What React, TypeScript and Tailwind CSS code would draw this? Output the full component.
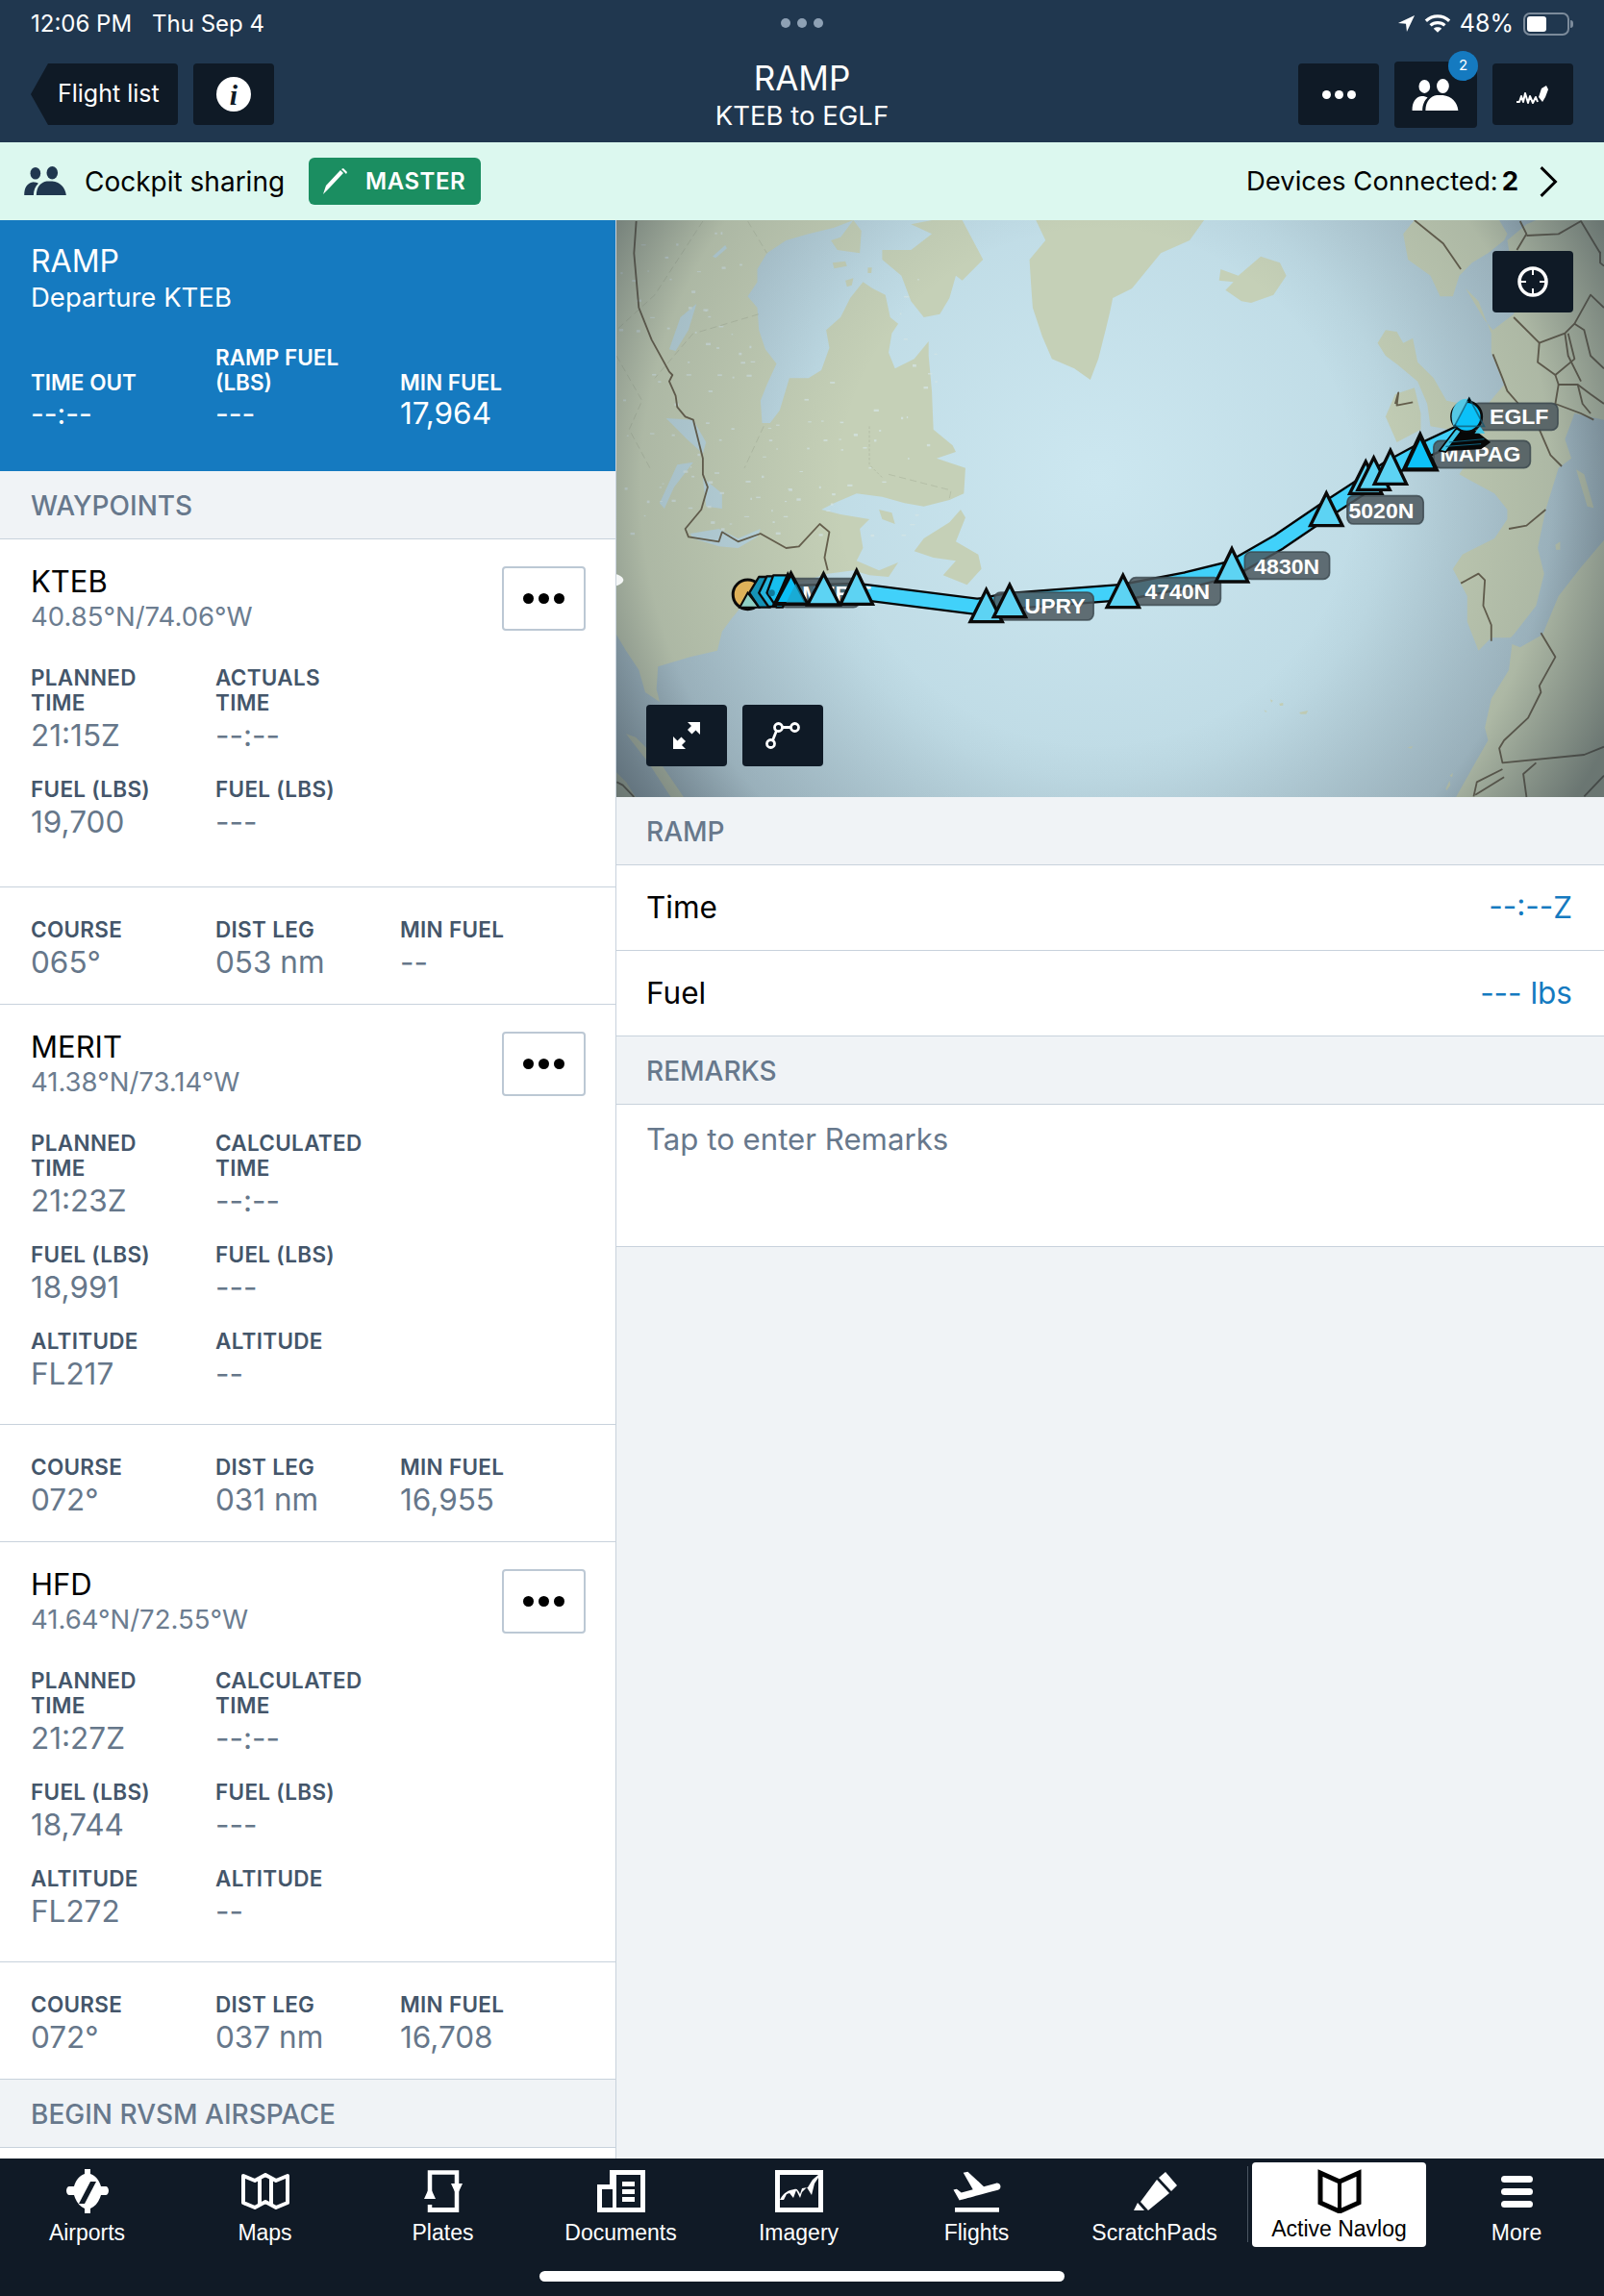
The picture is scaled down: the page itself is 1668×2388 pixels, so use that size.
import React from "react";
import { MdFlightTakeoff } from "react-icons/md";

const People = ({ className = "", color = "#fff" }: { className?: string; color?: string }) => (
  <svg viewBox="0 0 46 32" className={className} fill={color}>
    <ellipse cx="12" cy="7.5" rx="5.5" ry="6.5" />
    <ellipse cx="30" cy="7" rx="6" ry="7" />
    <path d="M0 31c0-8 3-13 9-14 3 0 5 .5 6 1.5-3 2.500-5 7-5 12.500z" />
    <path d="M13 31c0-9 5-14 11-15h6c9 1 14 7 15 15z" />
    <path d="M9 17c2 1 5 1 6 1l-3 2z" />
  </svg>
);

function Triangle({ x, a, b, fill = "#5dd3f3", sw = 10, hw }: { x: number; a: number; b: number; fill?: string; sw?: number; hw?: number }) {
  const h = hw ?? 50;
  return <polygon points={`${x},${a} ${x + h},${b} ${x - h},${b}`} fill={fill} stroke="#0a0a0a" strokeWidth={sw} strokeLinejoin="miter" />;
}

function Label({ x, y, w, h, tx, ty, t }: { x: number; y: number; w: number; h: number; tx: number; ty: number; t: string }) {
  return (
    <g>
      <rect x={x} y={y} width={w} height={h} rx="20" fill="#4c585e" fillOpacity="0.85" stroke="#3a464c" strokeOpacity="0.8" strokeWidth="5" />
      <text x={tx} y={ty} fontFamily="'Liberation Sans',sans-serif" fontWeight="700" fontSize="69" fill="#fff">{t}</text>
    </g>
  );
}

function speckles() {
  let s = 12345;
  const r = () => ((s = (s * 1103515245 + 12345) & 0x7fffffff) / 0x7fffffff);
  const out: React.ReactElement[] = [];
  for (let i = 0; i < 170; i++) {
    const x = r() * 1000;
    const y = 30 + r() * 950;
    if (x > 420 && x < 880 && y < 500) continue;
    out.push(<rect key={i} x={x} y={y} width={4 + r() * 12} height={3 + r() * 5} fill="#d4e4e4" fillOpacity="0.75" />);
  }
  return out;
}

function MapArt() {
  const land = "#c5d0b7";
  return (
    <svg viewBox="0 -3 3084 1800" preserveAspectRatio="none" className="block w-full h-full">
      <defs>
        <radialGradient id="water" gradientUnits="userSpaceOnUse" cx="1500" cy="800" r="1700">
          <stop offset="0" stopColor="#cce7f0" />
          <stop offset="0.55" stopColor="#bfdbe5" />
          <stop offset="1" stopColor="#a5bcc7" />
        </radialGradient>
        <radialGradient id="shade" gradientUnits="userSpaceOnUse" cx="1500" cy="830" r="1780">
          <stop offset="0.45" stopColor="#2e3a44" stopOpacity="0" />
          <stop offset="0.8" stopColor="#2e3a44" stopOpacity="0.16" />
          <stop offset="1" stopColor="#2e3a44" stopOpacity="0.6" />
        </radialGradient>
      </defs>
      <rect x="0" y="-3" width="3084" height="1800" fill="url(#water)" />
      <g fill={land}>
        <polygon points="0,-3 740,-3 680,20 600,40 530,60 470,100 440,150 440,190 410,235 440,270 445,340 465,400 500,445 470,510 450,560 455,630 480,630 510,590 540,490 600,490 640,465 665,395 655,340 700,300 730,240 770,190 800,210 840,230 855,300 880,320 860,350 850,410 870,460 930,430 975,375 975,420 985,530 990,650 1050,700 1060,720 1000,740 1090,770 1085,850 1040,870 960,890 900,880 830,860 750,850 680,880 640,900 700,915 790,930 760,960 770,1020 750,1060 820,1090 880,1065 850,1110 790,1105 740,1090 660,1100 560,1130 430,1150 400,1190 360,1240 330,1280 315,1340 230,1360 130,1390 125,1460 135,1500 90,1470 70,1400 30,1340 0,1290" />
        <polygon points="985,-3 1080,-3 1145,120 1080,185 1060,170 1040,240 1010,290 960,300 920,250 890,170 830,120 830,90 920,90 985,40 920,10" />
        <polygon points="740,-3 765,30 760,100 690,90 670,60 700,50" />
        <polygon points="675,130 715,125 720,140 680,148" />
        <polygon points="715,185 740,178 735,200 720,205" />
        <polygon points="785,145 798,145 796,162 785,162" />
        <polygon points="820,900 860,910 870,945 830,930" />
        <polygon points="1310,-3 1340,60 1290,120 1295,200 1300,270 1330,360 1360,430 1430,460 1480,495 1505,430 1530,330 1542,280 1550,240 1610,210 1700,100 1790,60 1835,-3" />
        <polygon points="930,1030 960,990 1040,940 1075,900 1090,925 1060,1000 1130,1040 1140,1085 1095,1135 1020,1105 1060,1060 990,1050" />
        <polygon points="30,1600 60,1610 130,1680 210,1797 170,1797 100,1690" />
        <polygon points="0,1720 30,1750 60,1797 0,1797" />
        <g transform="translate(1542,0)">
          <polygon points="345,150 400,170 470,110 530,130 550,170 510,230 440,255 410,250 360,215 385,190 340,185" />
          <polygon points="950,-3 1215,-3 1240,40 1230,60 1180,100 1130,130 1090,170 1070,235 1030,235 1000,170 930,120 915,40" />
          <polygon points="1110,210 1170,310 1195,340 1260,290 1290,200 1250,120 1240,60 1300,10 1330,-3 1542,-3 1542,620 1450,600 1420,680 1440,740 1400,770 1360,900 1335,1020 1355,1100 1330,1200 1260,1290 1250,1300 1190,1300 1150,1340 1115,1250 1115,1170 1070,1085 1100,1040 1200,990 1240,930 1240,900 1200,850 1090,790 1110,760 1130,570 1180,570 1230,510 1190,410 1190,350 1150,250" />
          <polygon points="890,540 950,520 970,600 970,650 895,690 860,610" />
          <polygon points="835,380 860,340 895,345 915,380 945,365 960,440 1010,490 1050,560 1100,570 1110,620 1060,650 1000,640 990,570 960,500 900,450 860,420" />
          <polygon points="1255,1320 1245,1400 1190,1490 1170,1580 1180,1620 1140,1690 1080,1797 1542,1797 1542,995 1470,1080 1400,1170 1350,1290 1280,1330" />
          <polygon points="1455,775 1480,790 1510,895 1490,890" />
          <polygon points="1390,1010 1405,1000 1405,1025 1392,1025" />
          <polygon points="480,1525 490,1530 485,1532" />
          <polygon points="500,1492 508,1496 503,1502" />
          <polygon points="528,1505 540,1503 540,1511 530,1512" />
          <polygon points="590,1533 618,1527 612,1538 595,1538" />
          <polygon points="928,1642 945,1638 940,1646" />
          <polygon points="1048,1770 1060,1745 1062,1760 1050,1777" />
          <polygon points="1060,1730 1070,1722 1068,1735" />
        </g>
      </g>
      <g fill="#bcd7df">
        <polygon points="155,615 240,620 280,690 270,725 220,680 180,640" />
        <polygon points="135,880 190,760 240,752 180,830 150,897" />
        <polygon points="270,800 330,850 330,897 280,890" />
        <polygon points="165,400 200,300 250,258 225,340 185,405" />
        <polygon points="230,975 320,960 380,990 450,960 440,985 380,1020 320,1015 240,990" />
        <polygon points="300,110 340,75 345,85 310,115" />
      </g>
      {speckles()}
      <g fill="none" stroke="#b2bca4" strokeWidth="3" strokeDasharray="22 12" opacity="0.8">
        <polyline points="410,0 470,100" />
        <polyline points="260,345 445,290" />
        <polyline points="0,420 80,560 40,650 110,780" />
        <polyline points="270,0 120,230 0,340" />
        <polyline points="240,350 120,490" />
        <polyline points="850,790 1045,840 1040,865" />
        <polyline points="460,640 400,770" />
        <polyline points="790,640 790,760 830,800" strokeDasharray="8 6" />
      </g>
      <g fill="none" stroke="#665f4c" strokeWidth="5.500" strokeLinejoin="round">
        <polyline points="62,0 55,100 70,270 110,370 165,470 175,480 165,500 185,545 190,580 215,610 240,620 270,740 270,790 285,830 265,900 215,960 225,985 320,1000 330,970 380,1000 450,975 530,1020 570,1015 635,945 665,970 650,1050 660,1090" />
        <polyline points="1,1750 20,1760 55,1797" />
        <g transform="translate(1542,0)">
          <polyline points="950,-3 1040,70 1095,150" />
          <polyline points="1195,415 1225,490 1240,530 1275,570" />
          <polyline points="1340,650 1375,730 1410,765" />
          <polyline points="1260,300 1340,380 1420,350 1450,320 1480,340 1500,420 1542,460" />
          <polyline points="1340,380 1335,440 1390,480 1450,430 1430,350" />
          <polyline points="1390,480 1400,510 1460,510 1500,540 1542,570" />
          <polyline points="1450,320 1500,230 1542,270" />
          <polyline points="1270,90 1300,40 1280,0" />
          <polyline points="1300,45 1400,40 1470,0 1530,100" />
          <polyline points="1460,510 1475,570 1500,600" />
          <polyline points="1420,350 1430,420 1470,500" />
          <polyline points="1400,510 1390,570 1470,600 1510,620" />
          <polyline points="890,570 900,535 895,575 945,565" />
          <polyline points="1245,960 1300,950 1360,900" />
          <polyline points="1095,1130 1150,1100 1170,1120 1165,1200 1190,1260 1190,1310" />
          <polyline points="1345,1285 1390,1360 1340,1450 1345,1470 1305,1550 1230,1620 1215,1645 1225,1690 1480,1665 1542,1640" />
          <polyline points="1330,1690 1290,1725 1300,1797" />
          <polyline points="1225,1710 1145,1750 1135,1795" />
          <polyline points="1230,1735 1140,1790" />
          <polyline points="1542,1730 1480,1795" />
          <polyline points="1530,95 1530,130 1542,140" />
        </g>
      </g>
      <rect x="0" y="-3" width="3084" height="1800" fill="url(#shade)" />
      <path d="M0 1102c14 4 22 12 22 18s-8 14-22 18z" fill="#f4f6f6" />

      <polyline points="430,1165 750,1155 1130,1203 1228,1185 1582,1158 1780,1120 1922,1085 2070,1000 2217,900 2417,770 2510,720 2660,650" fill="none" stroke="#050505" strokeWidth="56" strokeLinejoin="round" />
      <polyline points="430,1165 750,1155 1130,1203 1228,1185 1582,1158 1780,1120 1922,1085 2070,1000 2217,900 2417,770 2510,720 2660,650" fill="none" stroke="#41d1fa" strokeWidth="42" strokeLinejoin="round" />

      <Label x={510} y={1115} w={250} h={90} tx={580} ty={1185} t="MERIT" />
      <Label x={1180} y={1158} w={310} h={87} tx={1275} ty={1225} t="UPRY" />
      <Label x={1602} y={1112} w={285} h={86} tx={1650} ty={1180} t="4740N" />
      <Label x={1962} y={1032} w={265} h={85} tx={1992} ty={1100} t="4830N" />
      <Label x={2282} y={857} w={238} h={88} tx={2287} ty={928} t="5020N" />
      <Label x={2552} y={685} w={302} h={85} tx={2572} ty={750} t="MAPAG" />
      <Label x={2672} y={568} w={268} h={84} tx={2727} ty={633} t="EGLF" />

      <circle cx="410" cy="1165" r="46" fill="#deb159" stroke="#0a0a0a" strokeWidth="9" />
      <polygon points="410,1160 445,1205 385,1205" fill="#8fd0c4" stroke="#0a0a0a" strokeWidth="6" />
      <g stroke="#0a0a0a" strokeWidth="7" strokeLinejoin="round">
        <polygon points="445,1110 480,1110 455,1160 480,1205 445,1205 415,1160" fill="#1592b6" />
        <polygon points="470,1108 510,1108 480,1160 510,1203 475,1203 445,1160" fill="#25b5dd" />
        <polygon points="490,1105 535,1105 520,1205 500,1205 470,1160" fill="#17bfee" />
      </g>
      <circle cx="485" cy="1160" r="10" fill="#0e7a9b" />
      <polygon points="535,1092 590,1197 490,1197" fill="#0a0a0a" />
      <Triangle x={545} a={1100} b={1194} fill="#0bbff5" sw={12} />
      <polygon points="560,1130 590,1190 530,1190" fill="#1fa2c8" opacity="0.7" />
      <Triangle x={647} a={1100} b={1197} />
      <Triangle x={750} a={1090} b={1195} />
      <Triangle x={1155} a={1150} b={1250} />
      <Triangle x={1228} a={1135} b={1235} />
      <Triangle x={1582} a={1105} b={1205} />
      <Triangle x={1922} a={1022} b={1125} />
      <Triangle x={2217} a={848} b={950} />
      <Triangle x={2340} a={750} b={850} />
      <Triangle x={2365} a={738} b={838} />
      <Triangle x={2417} a={715} b={820} />
      <Triangle x={2510} a={668} b={775} fill="#0dc2f8" sw={13} />
      <polygon points="2640,620 2730,690 2700,712 2570,718 2600,680" fill="#070707" />
      <polygon points="2650,640 2590,720 2570,716 2620,650" fill="#3cc4e6" stroke="#050505" strokeWidth="5" />
      <polygon points="2697,640 2712,662 2680,662" fill="#3cc4e6" />
      <g stroke="#0f5f7a" strokeWidth="3">
        <line x1="2600" y1="690" x2="2710" y2="680" />
        <line x1="2590" y1="703" x2="2700" y2="695" />
      </g>
      <circle cx="2655" cy="610" r="47" fill="#0bc1f8" stroke="#0a0a0a" strokeWidth="8" />
      <path d="M2664 554L2615 640c-14-30-6-72 28-84z" fill="#55c8e4" />
      <polygon points="2663,552 2710,640 2617,640" fill="none" stroke="#12566e" strokeOpacity="0.7" strokeWidth="5" />
      <polygon points="2663,548 2670,562 2656,562" fill="#0a0a0a" />
    </svg>
  );
}

const MapButton = ({ className, children }: { className: string; children: React.ReactNode }) => (
  <div className={`absolute flex items-center justify-center w-[84px] h-[64px] rounded bg-[#0f1a26] ${className}`}>{children}</div>
);

type Wp = { name: string; coord: string; actual: boolean; time: string; fuel: string; alt?: string; course: string; dist: string; min: string };

const wps: Wp[] = [
  { name: "KTEB", coord: "40.85°N/74.06°W", actual: true, time: "21:15Z", fuel: "19,700", course: "065°", dist: "053 nm", min: "--" },
  { name: "MERIT", coord: "41.38°N/73.14°W", actual: false, time: "21:23Z", fuel: "18,991", alt: "FL217", course: "072°", dist: "031 nm", min: "16,955" },
  { name: "HFD", coord: "41.64°N/72.55°W", actual: false, time: "21:27Z", fuel: "18,744", alt: "FL272", course: "072°", dist: "037 nm", min: "16,708" },
];

function Stat({ l, v }: { l: string[]; v: string }) {
  return (
    <div>
      {l.map((t) => (
        <div key={t} className="text-[22.5px] leading-[26px] font-semibold text-[#44566a] tracking-[0.3px]">{t}</div>
      ))}
      <div className="text-[31.5px] leading-[40px] mt-[1px] text-[#66778a]">{v}</div>
    </div>
  );
}

function Waypoint({ w }: { w: Wp }) {
  return (
    <div className="bg-white border-b border-[#c8d2dc]">
      <div className={`relative px-[32px] pt-[25px] ${w.alt ? "pb-[32px]" : "pb-[47px]"}`}>
        <div className="text-[31px] leading-[38px] text-black">{w.name}</div>
        <div className="text-[27.5px] leading-[34px] text-[#6c7d90]">{w.coord}</div>
        <button className="absolute right-[31px] top-[28px] w-[87px] h-[67px] rounded border-2 border-[#bcc8d4] bg-white flex items-center justify-center gap-[5px]">
          <span className="w-[11px] h-[11px] rounded-full bg-black" />
          <span className="w-[11px] h-[11px] rounded-full bg-black" />
          <span className="w-[11px] h-[11px] rounded-full bg-black" />
        </button>
        <div className="grid grid-cols-[192px_192px] mt-[34px]">
          <Stat l={["PLANNED", "TIME"]} v={w.time} />
          <Stat l={[w.actual ? "ACTUALS" : "CALCULATED", "TIME"]} v="--:--" />
        </div>
        <div className="grid grid-cols-[192px_192px] mt-[23px]">
          <Stat l={["FUEL (LBS)"]} v={w.fuel} />
          <Stat l={["FUEL (LBS)"]} v="---" />
        </div>
        {w.alt && (
          <div className="grid grid-cols-[192px_192px] mt-[23px]">
            <Stat l={["ALTITUDE"]} v={w.alt} />
            <Stat l={["ALTITUDE"]} v="--" />
          </div>
        )}
      </div>
      <div className="border-t border-[#c8d2dc] px-[32px] pt-[31px] pb-[23px] grid grid-cols-[192px_192px_192px]">
        <Stat l={["COURSE"]} v={w.course} />
        <Stat l={["DIST LEG"]} v={w.dist} />
        <Stat l={["MIN FUEL"]} v={w.min} />
      </div>
    </div>
  );
}

const SectionHead = ({ t, inset = "px-[32px]" }: { t: string; inset?: string }) => (
  <div className={`h-[71px] shrink-0 flex items-center pt-[2px] bg-[#f0f3f6] border-b border-[#c8d2dc] text-[28px] font-medium text-[#67788c] ${inset}`}>{t}</div>
);

function Tab({ label, icon }: { label: string; icon: React.ReactNode }) {
  return (
    <div className="flex flex-col items-center pt-[11px]">
      <div className="h-[46px] flex items-center justify-center">{icon}</div>
      <div className="mt-[6px] text-[23px] leading-[28px] text-white [font-family:'Liberation_Sans',sans-serif]">{label}</div>
    </div>
  );
}

export default function App() {
  return (
    <div className="w-[1668px] h-[2388px] flex flex-col overflow-hidden bg-[#f0f3f6] [font-family:Inter,sans-serif]">
      {/* Header */}
      <header className="relative h-[148px] shrink-0 bg-[#20374f] text-white">
        <div className="h-[47px] flex items-center justify-between pl-[32px] pr-[32px] pt-[2px] text-[24px] leading-none">
          <div className="flex gap-[21px]">
            <span>12:06 PM</span>
            <span>Thu Sep 4</span>
          </div>
          <div className="flex items-center gap-[9px]">
            <svg viewBox="0 0 20 20" className="w-[19px] h-[19px]" fill="#fff"><path d="M19 1L1 9.500l8.500.8L10.500 19z" /></svg>
            <svg viewBox="0 0 30 22" className="w-[28px] h-[21px]" fill="none" stroke="#fff" strokeWidth="3.500">
              <path d="M2 8c7.500-7 18.500-7 26 0" />
              <path d="M7 13c4.500-4 11.500-4 16 0" />
              <path d="M15 21l-4.500-4.500c2.500-2 6.500-2 9 0z" fill="#fff" stroke="none" />
            </svg>
            <span className="text-[25px] leading-none">48%</span>
            <div className="flex items-center gap-[1px] ml-[1px]">
              <div className="w-[48px] h-[24px] rounded-[7px] border-2 border-[#7c8b9b] p-[2px]">
                <div className="w-[20px] h-full rounded-[3px] bg-white" />
              </div>
              <div className="w-[3px] h-[8px] rounded-r bg-[#7c8b9b]" />
            </div>
          </div>
        </div>
        <div className="absolute left-[812px] top-[19px] flex gap-[7px]">
          <span className="w-[10px] h-[10px] rounded-full bg-[#8ea1b5]" />
          <span className="w-[10px] h-[10px] rounded-full bg-[#8ea1b5]" />
          <span className="w-[10px] h-[10px] rounded-full bg-[#8ea1b5]" />
        </div>
        <div className="absolute inset-x-0 top-[60px] flex flex-col items-center">
          <div className="text-[35px] leading-[42px]">RAMP</div>
          <div className="text-[27.5px] leading-[34px] mt-[1px]">KTEB to EGLF</div>
        </div>
        <div className="absolute left-[32px] top-[66px] flex gap-[16px]">
          <div className="w-[153px] h-[64px] bg-[#0f1a26] rounded-r [clip-path:polygon(18px_0,100%_0,100%_100%,18px_100%,0_50%)] flex items-center pl-[28px] text-[25px]">Flight list</div>
          <div className="w-[84px] h-[64px] bg-[#0f1a26] rounded flex items-center justify-center">
            <div className="w-[36px] h-[36px] rounded-full bg-white flex items-center justify-center text-[#0f1a26] text-[30px] font-bold italic [font-family:'Liberation_Serif',serif]">i</div>
          </div>
        </div>
        <div className="absolute right-[32px] top-[66px] flex gap-[16px] items-start">
          <div className="w-[84px] h-[64px] bg-[#0f1a26] rounded flex items-center justify-center gap-[4px]">
            <span className="w-[9px] h-[9px] rounded-full bg-white" />
            <span className="w-[9px] h-[9px] rounded-full bg-white" />
            <span className="w-[9px] h-[9px] rounded-full bg-white" />
          </div>
          <div className="relative -mt-[2px] w-[86px] h-[69px] bg-[#0f1a26] rounded flex items-center justify-center">
            <People className="w-[50px] h-[34px]" />
            <div className="absolute right-[-1px] top-[-11px] w-[31px] h-[31px] rounded-full bg-[#157ac0] flex items-center justify-center text-[15px]">2</div>
          </div>
          <div className="w-[84px] h-[64px] bg-[#0f1a26] rounded flex items-center justify-center">
            <svg viewBox="0 0 36 22" className="w-[36px] h-[24px]" fill="none" stroke="#fff" strokeWidth="2">
              <path d="M1 19h3l2-6 2 6 2-9 3 10 2-7 3 7 3-6 2 5" strokeLinejoin="round" />
              <path d="M24 14l3-9 5-3 2 4-3 8-3 5z" fill="#fff" stroke="none" />
            </svg>
          </div>
        </div>
      </header>

      {/* Cockpit sharing */}
      <div className="h-[81px] shrink-0 bg-[#dcf8ef] flex items-center pl-[25px] pr-[47px]">
        <People className="w-[45px] h-[31px]" color="#20374f" />
        <span className="ml-[18px] text-[28px] text-black">Cockpit sharing</span>
        <div className="ml-[25px] w-[179px] h-[49px] rounded-md bg-[#1b8e61] flex items-center pl-[13px] text-white">
          <svg viewBox="0 0 28 28" className="w-[28px] h-[28px]" fill="#fff"><path d="M2 27l3-9L20 2l3 3L8 21z" /><path d="M21 1l2-1 4 4-1 2z" /></svg>
          <span className="ml-[18px] text-[24px] font-semibold tracking-[0.5px]">MASTER</span>
        </div>
        <div className="ml-auto flex items-center text-[27.500px] text-black">
          <span>Devices Connected:</span>
          <span className="ml-[4px] font-bold">2</span>
          <svg viewBox="0 0 20 32" className="ml-[20px] w-[22px] h-[34px]" fill="none" stroke="#000" strokeWidth="2.800"><path d="M3 2l14 14L3 30" /></svg>
        </div>
      </div>

      {/* Body */}
      <div className="flex-1 min-h-0 flex">
        <aside className="w-[641px] shrink-0 border-r border-[#c8d2dc] overflow-hidden flex flex-col bg-white">
          <div className="h-[261px] shrink-0 bg-[#157ac0] text-white px-[32px] pt-[24px]">
            <div className="text-[32px] leading-[38px]">RAMP</div>
            <div className="text-[27.500px] leading-[34px] mt-[1px]">Departure KTEB</div>
            <div className="grid grid-cols-[192px_192px_192px] items-end mt-[33px]">
              <div>
                <div className="text-[22.500px] leading-[26px] font-semibold">TIME OUT</div>
                <div className="text-[30px] leading-[38px]">--:--</div>
              </div>
              <div>
                <div className="text-[22.500px] leading-[26px] font-semibold">RAMP FUEL</div>
                <div className="text-[22.500px] leading-[26px] font-semibold">(LBS)</div>
                <div className="text-[30px] leading-[38px]">---</div>
              </div>
              <div>
                <div className="text-[22.500px] leading-[26px] font-semibold">MIN FUEL</div>
                <div className="text-[31.5px] leading-[38px]">17,964</div>
              </div>
            </div>
          </div>
          <SectionHead t="WAYPOINTS" />
          {wps.map((w) => <Waypoint key={w.name} w={w} />)}
          <SectionHead t="BEGIN RVSM AIRSPACE" />
        </aside>

        <main className="flex-1 min-w-0 flex flex-col">
          <div className="relative h-[600px] shrink-0 overflow-hidden">
            <MapArt />
            <MapButton className="right-[32px] top-[32px]">
              <svg viewBox="0 0 32 32" className="w-[32px] h-[32px]" fill="none" stroke="#fff">
                <circle cx="16" cy="16" r="14" strokeWidth="3.500" />
                <path d="M16 2v7M16 23v7M2 16h7M23 16h7" strokeWidth="2" />
              </svg>
            </MapButton>
            <MapButton className="left-[31px] bottom-[32px]">
              <svg viewBox="0 0 28 28" className="w-[28px] h-[28px]" fill="#fff">
                <path d="M15 0h13v13l-4.500-4.500-4 4-4.500-4.500 4-4zM0 28V15l4.500 4.500 4-4 4.500 4.500-4 4 4 4z" />
              </svg>
            </MapButton>
            <MapButton className="left-[131px] bottom-[32px]">
              <svg viewBox="0 0 36 28" className="w-[36px] h-[28px]" fill="none" stroke="#fff" strokeWidth="2.800">
                <circle cx="5.500" cy="22.500" r="4" />
                <circle cx="13.500" cy="5.500" r="4" />
                <circle cx="30.500" cy="5.500" r="4" />
                <path d="M17.500 5.500h9M7.500 19l4-10" />
              </svg>
            </MapButton>
          </div>
          <SectionHead t="RAMP" inset="px-[31px]" />
          <div className="h-[89px] shrink-0 bg-white border-b border-[#c8d2dc] flex items-center justify-between pl-[31px] pr-[33px] text-[31.5px]">
            <span className="text-black">Time</span>
            <span className="text-[#157ac0]">--:--Z</span>
          </div>
          <div className="h-[89px] shrink-0 bg-white border-b border-[#c8d2dc] flex items-center justify-between pl-[31px] pr-[33px] text-[31.5px]">
            <span className="text-black">Fuel</span>
            <span className="text-[#157ac0]">--- lbs</span>
          </div>
          <SectionHead t="REMARKS" inset="px-[31px]" />
          <div className="h-[148px] shrink-0 bg-white border-b border-[#c8d2dc] px-[31px] pt-[17px] text-[31.200px] leading-[38px] text-[#67788c]">Tap to enter Remarks</div>
        </main>
      </div>

      {/* Tab bar */}
      <nav className="relative h-[143px] shrink-0 bg-[#101a26]">
        <div className="-ml-[2px] grid grid-cols-[repeat(7,185px)_199px_170px] h-[92px]">
          <Tab label="Airports" icon={
            <svg viewBox="0 0 44 46" className="w-[44px] h-[46px]" fill="#fff">
              <path d="M19 0h6v5c5 1.500 9 6 11 13h5c1.500 0 3 2 3 4.500S42.500 27 41 27h-5c-2 7-6 12-11 14v5h-6v-5c-5-2-9-7-11-14H3c-1.500 0-3-2-3-4.500S1.500 18 3 18h5c2-7 6-11.500 11-13z" />
              <path d="M25 13h6L19 36h-6z" fill="#101a26" />
            </svg>
          } />
          <Tab label="Maps" icon={
            <svg viewBox="0 0 50 38" className="w-[50px] h-[38px]" fill="none" stroke="#fff" strokeWidth="4" strokeLinejoin="round">
              <path d="M2 3l12 5 11-6 11 6 12-5v28l-12 5-11-6-11 6-12-5z" />
              <path d="M19 6v26M31 6v26" />
            </svg>
          } />
          <Tab label="Plates" icon={
            <svg viewBox="0 0 46 44" className="w-[46px] h-[44px]" fill="none" stroke="#fff" strokeWidth="4.500">
              <path d="M9 26V2.500h28V42H9v-6" />
              <path d="M9 17L3 30h12zM37 27l-6-13h12z" fill="#fff" stroke="none" />
              <path d="M9 42h28" strokeWidth="6" />
            </svg>
          } />
          <Tab label="Documents" icon={
            <svg viewBox="0 0 50 44" className="w-[50px] h-[44px]" fill="#fff">
              <path d="M16 0h34v44H0V15h13V0zM20 5v34h25V5zM5 20v19h11V20z" fillRule="evenodd" />
              <path d="M26 12h13v5H26zM26 20h13v5H26zM26 28h13v5H26z" />
            </svg>
          } />
          <Tab label="Imagery" icon={
            <svg viewBox="0 0 50 44" className="w-[50px] h-[44px]" fill="#fff">
              <path d="M0 0h50v44H0zM5 5v34h40V5z" fillRule="evenodd" />
              <path d="M5 31c4-8 9-10 15-11 3-1 4 1 6 5l2-6 6-1 5-8 6-5v3l-4 6-3 12-5-8-5 5-2 6-4-8-3 8-4-5-3 1-3 6z" />
            </svg>
          } />
          <Tab label="Flights" icon={<MdFlightTakeoff className="w-[58px] h-[58px] text-white" />} />
          <Tab label="ScratchPads" icon={
            <svg viewBox="0 0 46 40" className="w-[46px] h-[40px]" fill="#fff">
              <path d="M34 0l12 14-6 6L27 6z" />
              <path d="M25 8l13 14-22 18-8-9z" />
              <path d="M5 32l7 8H1z" />
            </svg>
          } />
          <div className="relative flex justify-center">
            <div className="absolute left-[4px] top-[8px] w-px h-[79px] bg-[#4a5561]" />
            <div className="mt-[4px] w-[181px] h-[88px] bg-white rounded flex flex-col items-center pt-[7px]">
              <svg viewBox="0 0 46 46" className="w-[46px] h-[46px]" fill="none" stroke="#000" strokeWidth="5">
                <path d="M3 4l20 9 20-9v31L23 44 3 35z" strokeLinejoin="miter" />
                <path d="M23 13v31" strokeWidth="4" />
              </svg>
              <div className="mt-[2px] text-[23px] leading-[28px] text-black [font-family:'Liberation_Sans',sans-serif]">Active Navlog</div>
            </div>
          </div>
          <Tab label="More" icon={
            <div className="flex flex-col gap-[6px]">
              <span className="block w-[33px] h-[7px] rounded-full bg-white" />
              <span className="block w-[33px] h-[7px] rounded-full bg-white" />
              <span className="block w-[33px] h-[7px] rounded-full bg-white" />
            </div>
          } />
        </div>
        <div className="absolute left-[561px] top-[117px] w-[546px] h-[11px] rounded-full bg-white" />
      </nav>
    </div>
  );
}
